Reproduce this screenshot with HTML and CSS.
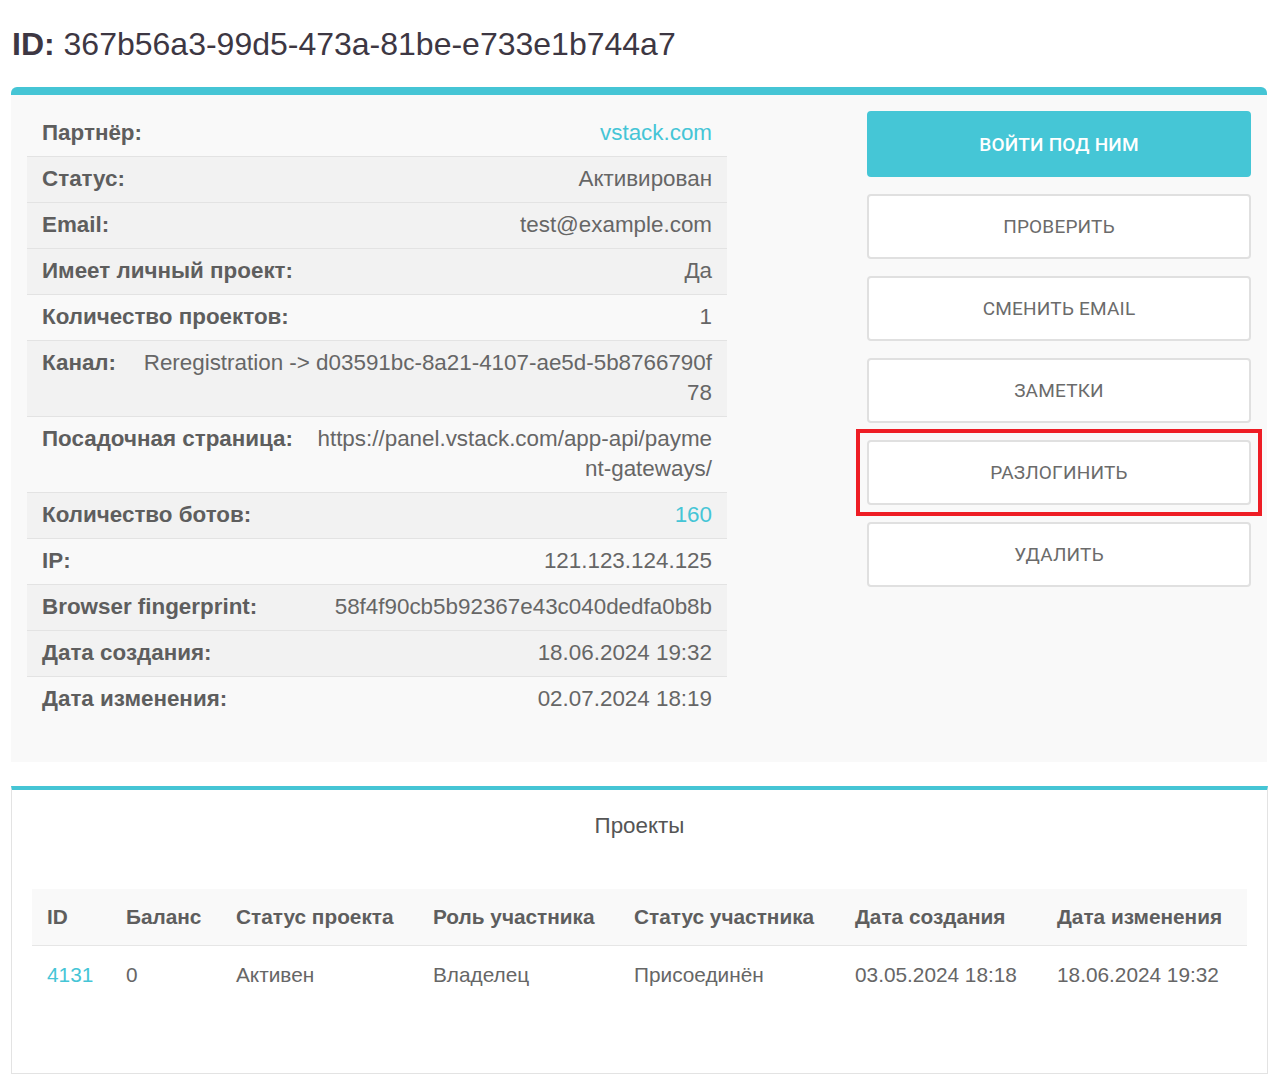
FILE: index.html
```html
<!DOCTYPE html>
<html>
<head>
  <meta charset="utf-8">
  <title>Пользователь 367b56a3-99d5-473a-81be-e733e1b744a7</title>
  <link rel="stylesheet" href="styles.css">
</head>
<body>
  <h1 class="page-title"><b>ID:</b> 367b56a3-99d5-473a-81be-e733e1b744a7</h1>

  <div class="panel">
    <div class="info-table">
      <div class="info-row">
        <span class="info-label">Партнёр:</span>
        <span class="info-value"><a href="#">vstack.com</a></span>
      </div>
      <div class="info-row dark">
        <span class="info-label">Статус:</span>
        <span class="info-value">Активирован</span>
      </div>
      <div class="info-row dark">
        <span class="info-label">Email:</span>
        <span class="info-value">test@example.com</span>
      </div>
      <div class="info-row dark">
        <span class="info-label">Имеет личный проект:</span>
        <span class="info-value">Да</span>
      </div>
      <div class="info-row">
        <span class="info-label">Количество проектов:</span>
        <span class="info-value">1</span>
      </div>
      <div class="info-row dark">
        <span class="info-label">Канал:</span>
        <span class="info-value long">Reregistration -&gt; d03591bc-8a21-4107-ae5d-5b8766790f78</span>
      </div>
      <div class="info-row">
        <span class="info-label">Посадочная страница:</span>
        <span class="info-value long">https://panel.vstack.com/app-api/payment-gateways/</span>
      </div>
      <div class="info-row dark">
        <span class="info-label">Количество ботов:</span>
        <span class="info-value"><a href="#">160</a></span>
      </div>
      <div class="info-row">
        <span class="info-label">IP:</span>
        <span class="info-value">121.123.124.125</span>
      </div>
      <div class="info-row dark">
        <span class="info-label">Browser fingerprint:</span>
        <span class="info-value">58f4f90cb5b92367e43c040dedfa0b8b</span>
      </div>
      <div class="info-row dark">
        <span class="info-label">Дата создания:</span>
        <span class="info-value">18.06.2024 19:32</span>
      </div>
      <div class="info-row">
        <span class="info-label">Дата изменения:</span>
        <span class="info-value">02.07.2024 18:19</span>
      </div>
    </div>

    <div class="actions">
      <button class="btn btn-primary">Войти под ним</button>
      <button class="btn">Проверить</button>
      <button class="btn">Сменить email</button>
      <button class="btn">Заметки</button>
      <button class="btn marked">Разлогинить</button>
      <button class="btn">Удалить</button>
    </div>
  </div>

  <div class="panel-projects">
    <div class="projects-title">Проекты</div>
    <table class="projects">
      <thead>
        <tr>
          <th class="c-id">ID</th>
          <th class="c-bal">Баланс</th>
          <th class="c-st">Статус проекта</th>
          <th class="c-role">Роль участника</th>
          <th class="c-mst">Статус участника</th>
          <th class="c-cr">Дата создания</th>
          <th>Дата изменения</th>
        </tr>
      </thead>
      <tbody>
        <tr>
          <td><a href="#">4131</a></td>
          <td>0</td>
          <td>Активен</td>
          <td>Владелец</td>
          <td>Присоединён</td>
          <td>03.05.2024 18:18</td>
          <td>18.06.2024 19:32</td>
        </tr>
      </tbody>
    </table>
  </div>
</body>
</html>
```

FILE: styles.css
```css
body {
  margin: 0;
  padding: 0 12px 10px 11px;
  background: #fff;
  font-family: "Liberation Sans", Arial, sans-serif;
  color: #666;
}

a {
  color: #45c5d6;
  text-decoration: none;
}

.page-title {
  margin: 0;
  padding: 26px 1px 24px;
  font-size: 32px;
  line-height: 37px;
  font-weight: normal;
  color: #3d3743;
}

/* верхняя карточка */
.panel {
  display: flex;
  justify-content: space-between;
  align-items: flex-start;
  margin-right: 1px;
  background: #f9f9f9;
  border-top: 8px solid #45c5d5;
  border-radius: 6px 6px 0 0;
  padding: 16px 16px 40px;
}

.info-table {
  width: 700px;
}

.info-row {
  display: flex;
  justify-content: space-between;
  padding: 7px 15px 8px;
  font-size: 22.4px;
  line-height: 30px;
  border-top: 1px solid #e3e3e3;
  background: #f9f9f9;
}
.info-row:first-child {
  border-top: none;
}
.info-row.dark {
  background: #f2f2f2;
}

.info-label {
  font-weight: bold;
  color: #5e5e5e;
  white-space: nowrap;
  flex-shrink: 0;
}

.info-value {
  margin-left: 24px;
  text-align: right;
  color: #666;
}
.info-value.long {
  word-break: break-all;
}

.actions {
  width: 384px;
  display: flex;
  flex-direction: column;
  gap: 17px;
}

.btn {
  position: relative;
  height: 65px;
  background: #fff;
  border: 2px solid #e0e0e0;
  border-radius: 4px;
  font-family: Roboto, "Liberation Sans", sans-serif;
  font-size: 19px;
  text-transform: uppercase;
  color: #6b6b6b;
  letter-spacing: 0.2px;
  cursor: pointer;
}
.btn-primary {
  height: 66px;
  background: #45c6d6;
  border-color: #45c6d6;
  color: #fff;
  font-weight: 500;
}
/* красная рамка-пометка поверх кнопки */
.btn.marked::after {
  content: "";
  position: absolute;
  top: -13px;
  left: -13px;
  right: -13px;
  bottom: -13px;
  border: 4px solid #ee1d25;
}

/* проекты */
.panel-projects {
  margin-top: 24px;
  border: 1px solid #e3e3e3;
  border-top: 4px solid #45c5d5;
  padding: 21px 20px 70px;
}

.projects-title {
  text-align: center;
  font-size: 22.4px;
  line-height: 30px;
  color: #555;
  margin-bottom: 48px;
}

.projects {
  width: 100%;
  border-collapse: collapse;
  font-size: 20.8px;
}
.projects th,
.projects td {
  text-align: left;
  padding: 14px 15px;
  line-height: 28px;
  white-space: nowrap;
}
.projects th {
  background: #f9f9f9;
  color: #5e5e5e;
  border-bottom: 1px solid #e6e6e6;
}
.projects td {
  color: #666;
  padding-top: 15px;
}
.c-id { width: 49px; }
.c-bal { width: 80px; }
.c-st { width: 167px; }
.c-role { width: 171px; }
.c-mst { width: 191px; }
.c-cr { width: 172px; }
```
